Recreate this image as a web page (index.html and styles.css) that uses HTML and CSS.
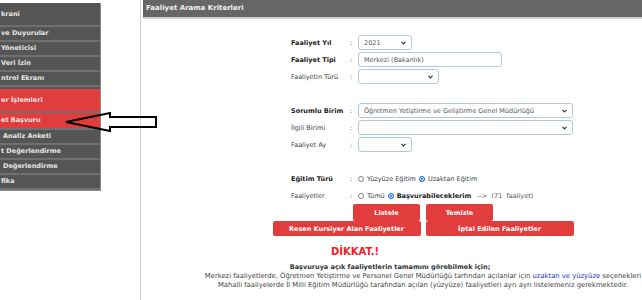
FILE: index.html
```html
<!DOCTYPE html>
<html lang="tr">
<head>
    <meta charset="UTF-8">
    <meta name="viewport" content="width=device-width, initial-scale=1.0">
    <title>Faaliyet Arama Kriterleri</title>
    <link rel="stylesheet" href="styles.css">
</head>
<body>
    <div class="page">
        <aside class="side">
            <ul class="menu">
                <li class="menu-item first">krani</li>
                <li class="menu-item">ve Duyurular</li>
                <li class="menu-item">Yöneticisi</li>
                <li class="menu-item">Veri İzin</li>
                <li class="menu-item">ntrol Ekranı</li>
                <li class="menu-item group">er İşlemleri</li>
                <li class="menu-item active">et Başvuru</li>
                <li class="menu-item indent">Analiz Anketi</li>
                <li class="menu-item">t Değerlendirme</li>
                <li class="menu-item indent">Değerlendirme</li>
                <li class="menu-item">fika</li>
            </ul>
        </aside>
        <main class="panel">
            <div class="panel-head">Faaliyet Arama Kriterleri</div>
            <div class="criteria">
                <div class="row">
                    <span class="lbl strong">Faaliyet Yıl</span><span class="colon">:</span>
                    <div class="select w-short"><span>2021</span><svg class="chev" viewBox="0 0 6 4"><path d="M0.6 0.6 L3 3 L5.4 0.6"/></svg></div>
                </div>
                <div class="row">
                    <span class="lbl strong">Faaliyet Tipi</span><span class="colon">:</span>
                    <div class="select w-mid"><span>Merkezi (Bakanlık)</span></div>
                </div>
                <div class="row">
                    <span class="lbl">Faaliyetin Türü</span><span class="colon">:</span>
                    <div class="select w-type"><span></span><svg class="chev" viewBox="0 0 6 4"><path d="M0.6 0.6 L3 3 L5.4 0.6"/></svg></div>
                </div>
                <div class="spacer first-gap"></div>
                <div class="row">
                    <span class="lbl strong">Sorumlu Birim</span><span class="colon">:</span>
                    <div class="select w-long"><span>Öğretmen Yetiştirme ve Geliştirme Genel Müdürlüğü</span><svg class="chev" viewBox="0 0 6 4"><path d="M0.6 0.6 L3 3 L5.4 0.6"/></svg></div>
                </div>
                <div class="row">
                    <span class="lbl">İlgili Birimi</span><span class="colon">:</span>
                    <div class="select w-long"><span></span><svg class="chev" viewBox="0 0 6 4"><path d="M0.6 0.6 L3 3 L5.4 0.6"/></svg></div>
                </div>
                <div class="row">
                    <span class="lbl">Faaliyet Ay</span><span class="colon">:</span>
                    <div class="select w-short"><span></span><svg class="chev" viewBox="0 0 6 4"><path d="M0.6 0.6 L3 3 L5.4 0.6"/></svg></div>
                </div>
                <div class="spacer second-gap"></div>
                <div class="row">
                    <span class="lbl strong">Eğitim Türü</span><span class="colon">:</span>
                    <div class="choices">
                        <span class="radio"></span><span>Yüzyüze Eğitim</span>
                        <span class="radio on"></span><span>Uzaktan Eğitim</span>
                    </div>
                </div>
                <div class="row">
                    <span class="lbl">Faaliyetler</span><span class="colon">:</span>
                    <div class="choices">
                        <span class="radio"></span><span>Tümü</span>
                        <span class="radio on"></span><span class="strong">Başvurabileceklerim</span>
                        <span class="count">--&gt;&nbsp; (71&nbsp; faaliyet)</span>
                    </div>
                </div>
            </div>
            <div class="actions">
                <div class="btn-row">
                    <button class="btn small">Listele</button>
                    <button class="btn small">Temizle</button>
                </div>
                <div class="btn-row wide">
                    <button class="btn large">Resen Kursiyer Alan Faaliyetler</button>
                    <button class="btn large">İptal Edilen Faaliyetler</button>
                </div>
            </div>
            <div class="notice">
                <div class="notice-title">DİKKAT.!</div>
                <div class="notice-lead">Başvuruya açık faaliyetlerin tamamını görebilmek için;</div>
                <div class="notice-text">Merkezi faaliyetlerde, Öğretmen Yetiştirme ve Personel Genel Müdürlüğü tarfından açılanlar için <span class="hl">uzaktan ve yüzyüze</span> seçenekleri</div>
                <div class="notice-text">Mahalli faaliyelerde İl Milli Eğitim Müdürlüğü tarafından açılan (yüzyüze) faaliyetleri ayrı ayrı listelemeniz gerekmektedir.</div>
            </div>
        </main>
    </div>
    <svg class="pointer" viewBox="0 0 100 24" width="100" height="24">
        <polygon points="6,10 50,1 50,5 96,5 96,15 50,15 50,19"/>
    </svg>
</body>
</html>
```

FILE: styles.css
```css
body {
    margin: 0;
    padding: 0;
    background-color: #fff;
    font-family: "DejaVu Sans", Verdana, sans-serif;
    font-size: 6.5px;
    color: #333;
    overflow: hidden;
}
.page {
    display: flex;
    height: 300px;
}
.side {
    width: 140px;
    flex-shrink: 0;
    border-right: 1px solid #d2d2d2;
}
.menu {
    list-style: none;
    margin: 3px 0 0 0;
    padding: 0;
    width: 100px;
    background-color: #555;
    border-right: 1px solid #8a8a8a;
    border-bottom: 1px solid #8a8a8a;
    overflow: hidden;
}
.menu-item {
    height: 13px;
    line-height: 13px;
    padding-left: 1px;
    border-bottom: 2px solid #707070;
    color: #e6e6e6;
    font-weight: bold;
    white-space: nowrap;
}
.menu-item.first {
    height: 22px;
    line-height: 22px;
}
.menu-item.group {
    margin-top: 2px;
    height: 22px;
    line-height: 22px;
    background-color: #e23d3d;
}
.menu-item.active {
    height: 15px;
    line-height: 15px;
    background-color: #e23d3d;
}
.menu-item.indent {
    padding-left: 3px;
}
.panel {
    width: 560px;
    flex-shrink: 0;
    margin-left: 2px;
}
.panel-head {
    height: 17px;
    line-height: 17px;
    padding-left: 3px;
    background-color: #666;
    border-bottom: 2px solid #cfcfcf;
    color: #f2f2f2;
    font-weight: bold;
    font-size: 7px;
}
.criteria {
    margin: 16px 0 0 148px;
    display: flex;
    flex-direction: column;
    gap: 2px;
}
.row {
    display: flex;
    align-items: center;
    height: 15px;
}
.lbl {
    width: 59px;
    color: #444;
}
.strong {
    font-weight: bold;
    color: #222;
}
.colon {
    width: 8px;
}
.select {
    display: flex;
    align-items: center;
    justify-content: space-between;
    box-sizing: border-box;
    height: 15px;
    padding: 0 5px;
    border: 1px solid #b4c8dc;
    border-radius: 3px;
    background-color: #fff;
    color: #555;
}
.w-short {
    width: 54px;
}
.w-mid {
    width: 144px;
}
.w-type {
    width: 81px;
}
.w-long {
    width: 215px;
}
.chev {
    width: 5px;
    height: 4px;
    fill: none;
    stroke: #333;
    stroke-width: 1.4;
}
.spacer.first-gap {
    height: 15px;
}
.spacer.second-gap {
    height: 15px;
}
.choices {
    display: flex;
    align-items: center;
    gap: 3px;
    color: #444;
}
.radio {
    width: 6px;
    height: 6px;
    box-sizing: border-box;
    border: 1px solid #888;
    border-radius: 50%;
    background-color: #fff;
}
.radio.on {
    border-color: #1a73e8;
    background-color: #1a73e8;
    box-shadow: inset 0 0 0 1px #fff;
}
.count {
    margin-left: 3px;
    color: #555;
}
.actions {
    display: flex;
    flex-direction: column;
    align-items: center;
    margin-top: 1px;
}
.btn-row {
    display: flex;
    gap: 6px;
}
.btn-row.wide {
    gap: 5px;
}
.btn {
    border: none;
    border-radius: 2px;
    background-color: #e23d3d;
    color: #fff;
    font-family: "DejaVu Sans", Verdana, sans-serif;
    font-size: 6.5px;
    font-weight: bold;
    padding: 0;
}
.btn.small {
    width: 67px;
    height: 17px;
}
.btn.large {
    width: 148px;
    height: 15px;
}
.notice {
    text-align: center;
    margin-top: 7px;
}
.notice-title {
    color: #ee1c25;
    font-weight: bold;
    font-size: 10px;
    padding-right: 136px;
    height: 17px;
    line-height: 17px;
}
.notice-lead {
    font-weight: bold;
    padding-right: 66px;
    margin-top: 3px;
    line-height: 9px;
}
.notice-text {
    font-size: 6.8px;
    line-height: 9px;
    white-space: nowrap;
    color: #444;
}
.hl {
    color: #2233cc;
}
.pointer {
    position: absolute;
    left: 60px;
    top: 112px;
    fill: none;
    stroke: #000;
    stroke-width: 2;
}
```
